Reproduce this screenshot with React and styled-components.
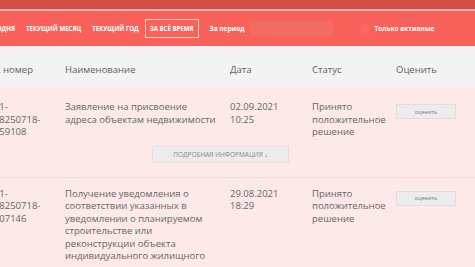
import React from 'react';
import styled, { createGlobalStyle } from 'styled-components';

const GlobalStyle = createGlobalStyle`
    body {
        margin: 0;
        font-family: "Open Sans", "Liberation Sans", sans-serif;
        background: #fde9e8;
        overflow: hidden;
    }
`;

const Page = styled.div`
    width: 475px;
    height: 267px;
    overflow: hidden;
    background: #fde9e8;
`;

const Inner = styled.div`
    width: 501px;
    margin-left: -25px;
`;

const TopStrip = styled.div`
    height: 9px;
    background: #d44c42;
    border-bottom: 2px solid #f8b3aa;
`;

const FilterBar = styled.div`
    height: 35px;
    background: #f9625a;
    display: flex;
    align-items: center;
    padding-left: 6px;
    color: #fff;
`;

const FilterItem = styled.div`
    font-size: 6.1px;
    font-weight: 700;
    text-transform: uppercase;
    padding: 4px 4px 4px 4px;
    margin-right: 1px;
    border: 1px solid ${p => p.active ? '#fbd0cb' : 'transparent'};
    white-space: nowrap;
`;

const PeriodLabel = styled.div`
    font-size: 6.5px;
    font-weight: 700;
    margin-left: 10px;
`;

const PeriodInput = styled.div`
    width: 83px;
    height: 15px;
    margin-left: 5px;
    background: #f26c64;
`;

const CheckWrap = styled.label`
    display: flex;
    align-items: center;
    margin-left: 28px;
    font-size: 6.5px;
    font-weight: 700;
`;

const CheckBox = styled.span`
    width: 8px;
    height: 8px;
    background: #f66a62;
    margin-right: 6px;
`;

const Gap = styled.div`
    height: 4px;
    background: #fdefed;
`;

const Grid = styled.div`
    display: grid;
    grid-template-columns: 82px 165px 82px 84px 1fr;
    padding-left: 8px;
`;

const HeadRow = styled(Grid)`
    height: 38px;
    align-items: center;
    background: #f3f3f3;
    font-size: 9.5px;
    color: #5e5e5e;
`;

const Row = styled.div`
    padding-top: ${p => p.top}px;
    border-top: ${p => p.divider ? '1px solid #f6dbd9' : 'none'};
`;

const Cell = styled.div`
    font-size: 9.5px;
    line-height: 12.5px;
    color: #666;
    white-space: nowrap;
`;

const RateButton = styled.div`
    width: 58px;
    height: 13px;
    margin-top: 3px;
    background: #ececec;
    border: 1px solid #dedede;
    display: flex;
    align-items: center;
    justify-content: center;
    font-size: 5.5px;
    color: #777;
`;

const DetailsLine = styled.div`
    display: flex;
    justify-content: center;
    padding: 7px 10px 14px 0;
`;

const DetailsButton = styled.div`
    width: 135px;
    height: 15px;
    background: #ececec;
    border: 1px solid #e0e0e0;
    display: flex;
    align-items: center;
    justify-content: center;
    font-size: 6.5px;
    color: #888;
    text-transform: uppercase;
`;

const rows = [
    {
        num: ['2021-', '0008250718-', '00059108'],
        name: ['Заявление на присвоение', 'адреса объектам недвижимости'],
        date: ['02.09.2021', '10:25'],
        details: true,
    },
    {
        num: ['2021-', '0008250718-', '00007146'],
        name: [
            'Получение уведомления о',
            'соответствии указанных в',
            'уведомлении о планируемом',
            'строительстве или',
            'реконструкции объекта',
            'индивидуального жилищного',
            'строительства',
        ],
        date: ['29.08.2021', '18:29'],
    },
];

const Lines = ({ items }) => items.map((t, i) => <div key={i}>{t}</div>);

const App = () => {
    return (
        <Page>
            <GlobalStyle />
            <Inner>
                <TopStrip />
                <FilterBar>
                    <FilterItem>Сегодня</FilterItem>
                    <FilterItem>Текущий месяц</FilterItem>
                    <FilterItem>Текущий год</FilterItem>
                    <FilterItem active>За всё время</FilterItem>
                    <PeriodLabel>За период</PeriodLabel>
                    <PeriodInput />
                    <CheckWrap>
                        <CheckBox />
                        Только активные
                    </CheckWrap>
                </FilterBar>
                <Gap />
                <HeadRow>
                    <div>Рег. номер</div>
                    <div>Наименование</div>
                    <div>Дата</div>
                    <div>Статус</div>
                    <div>Оценить</div>
                </HeadRow>
                {rows.map((r, i) => (
                    <Row key={i} top={i === 0 ? 13 : 10} divider={i > 0}>
                        <Grid>
                            <Cell><Lines items={r.num} /></Cell>
                            <Cell><Lines items={r.name} /></Cell>
                            <Cell><Lines items={r.date} /></Cell>
                            <Cell><Lines items={['Принято', 'положительное', 'решение']} /></Cell>
                            <div><RateButton>оценить</RateButton></div>
                        </Grid>
                        {r.details && (
                            <DetailsLine>
                                <DetailsButton>Подробная информация ↓</DetailsButton>
                            </DetailsLine>
                        )}
                    </Row>
                ))}
            </Inner>
        </Page>
    );
};

export default App;
